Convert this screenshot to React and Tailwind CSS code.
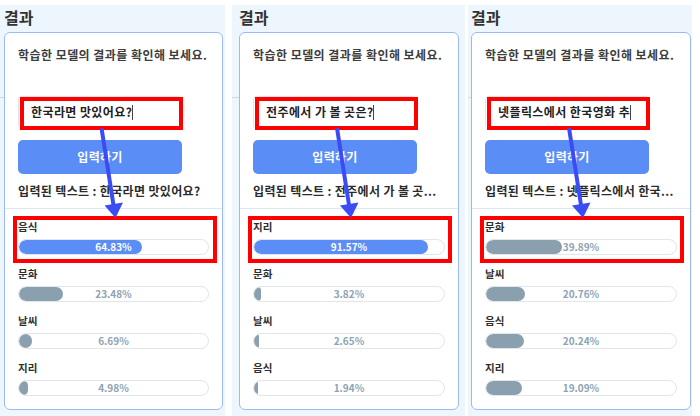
import React from "react";

const panels = [
  {
    w: "w-[225px]",
    cardMl: "ml-[4px]",
    cardW: "w-[219px]",
    lineW: "w-[4px]",
    input: "한국라면 맛있어요?",
    shown: "입력된 텍스트 : 한국라면 맛있어요?",
    rows: [
      ["음식", 64.83],
      ["문화", 23.48],
      ["날씨", 6.69],
      ["지리", 4.98],
    ],
  },
  {
    w: "w-[233px]",
    cardMl: "ml-[7px]",
    cardW: "w-[220px]",
    lineW: "w-[7px]",
    input: "전주에서 가 볼 곳은?",
    shown: "입력된 텍스트 : 전주에서 가 볼 곳...",
    rows: [
      ["지리", 91.57],
      ["문화", 3.82],
      ["날씨", 2.65],
      ["음식", 1.94],
    ],
  },
  {
    w: "w-[224px]",
    cardMl: "ml-[3px]",
    cardW: "w-[220px]",
    lineW: "w-[3px]",
    input: "넷플릭스에서 한국영화 추",
    shown: "입력된 텍스트 : 넷플릭스에서 한국...",
    rows: [
      ["문화", 39.89],
      ["날씨", 20.76],
      ["음식", 20.24],
      ["지리", 19.09],
    ],
  },
];

function Bar({ label, value, first }) {
  const blue = value > 50;
  return (
    <div className={first ? "mt-[11px]" : "mt-[12px]"}>
      <div className="text-[10.5px] leading-[14px] font-bold text-[#2f2f2f]">{label}</div>
      <div className="relative mt-[5px] h-[16px] rounded-full border border-[#e2e5e9] bg-white overflow-hidden">
        <div
          className={`absolute left-0 top-0 bottom-0 rounded-full ${blue ? "bg-[#5b8df6]" : "bg-[#8ba0af]"}`}
          style={{ width: `${value}%` }}
        />
        <div
          className={`absolute inset-0 flex items-center justify-center text-[10px] font-bold leading-none ${blue ? "text-white" : "text-[#8ea3b4]"}`}
        >
          {value.toFixed(2)}%
        </div>
      </div>
    </div>
  );
}

function Panel({ p }) {
  return (
    <div className={`relative ${p.w} h-[411px] mt-[5px] bg-[#eef6fd] flex flex-col`}>
      <div className={`absolute left-0 top-[92px] h-px ${p.lineW} bg-[#d3d7db]`} />
      <div className={`${p.cardMl} mt-[2px] text-[16px] leading-[20px] font-bold text-[#333333]`}>결과</div>
      <div className={`relative ${p.cardMl} ${p.cardW} mt-[5px] h-[378px] bg-white border border-[#9db9f4] rounded-[6px] px-[13px]`}>
        <div className="mt-[14px] text-[12px] leading-[16px] font-bold tracking-[0.45px] text-[#3d3d3d] whitespace-nowrap">
          학습한 모델의 결과를 확인해 보세요.
        </div>
        <div className="mt-[33px] w-[163px] h-[32px] border border-[#e4e4e4] rounded-[3px] bg-white flex items-center pl-[12px] overflow-hidden">
          <span className="text-[12px] font-bold tracking-[0.4px] text-[#222222] whitespace-nowrap">{p.input}</span>
          <span className="inline-block w-px h-[15px] bg-[#444444]" />
        </div>
        <div className="mt-[12px] w-[164px] h-[34px] rounded-[5px] bg-[#5b8df6] flex items-center justify-center text-[12px] font-bold tracking-[0.3px] text-white">
          입력하기
        </div>
        <div className="mt-[9px] text-[12px] leading-[16px] font-bold tracking-[0.35px] text-[#2b2b2b] whitespace-nowrap">{p.shown}</div>
        <div className="mt-[9px] -mx-[13px] h-px bg-[#dbe7f6]" />
        {p.rows.map(([l, v], i) => (
          <Bar key={l} label={l} value={v} first={i === 0} />
        ))}

        <div className="absolute left-[15px] top-[64px] w-[163px] h-[33px] border-[4px] border-[#ff0000]" />
        <div className="absolute left-[8px] top-[183px] w-[204px] h-[47px] border-[4px] border-[#ff0000]" />
        <svg className="absolute left-0 top-0 w-full h-full overflow-visible pointer-events-none" viewBox="0 0 218 376" width="218" height="376">
          <line x1="97" y1="95" x2="109" y2="172" stroke="#3b4cf4" strokeWidth="4" />
          <polygon points="111,185 118.5,169.5 100,172.5" fill="#3b4cf4" />
        </svg>
      </div>
    </div>
  );
}

export default function App() {
  return (
    <div className="w-[700px] h-[416px] bg-white flex font-['Noto_Sans_CJK_KR','Noto_Sans',sans-serif] overflow-hidden">
      <Panel p={panels[0]} />
      <div className="w-[7px]" />
      <Panel p={panels[1]} />
      <div className="w-[3px]" />
      <Panel p={panels[2]} />
    </div>
  );
}
